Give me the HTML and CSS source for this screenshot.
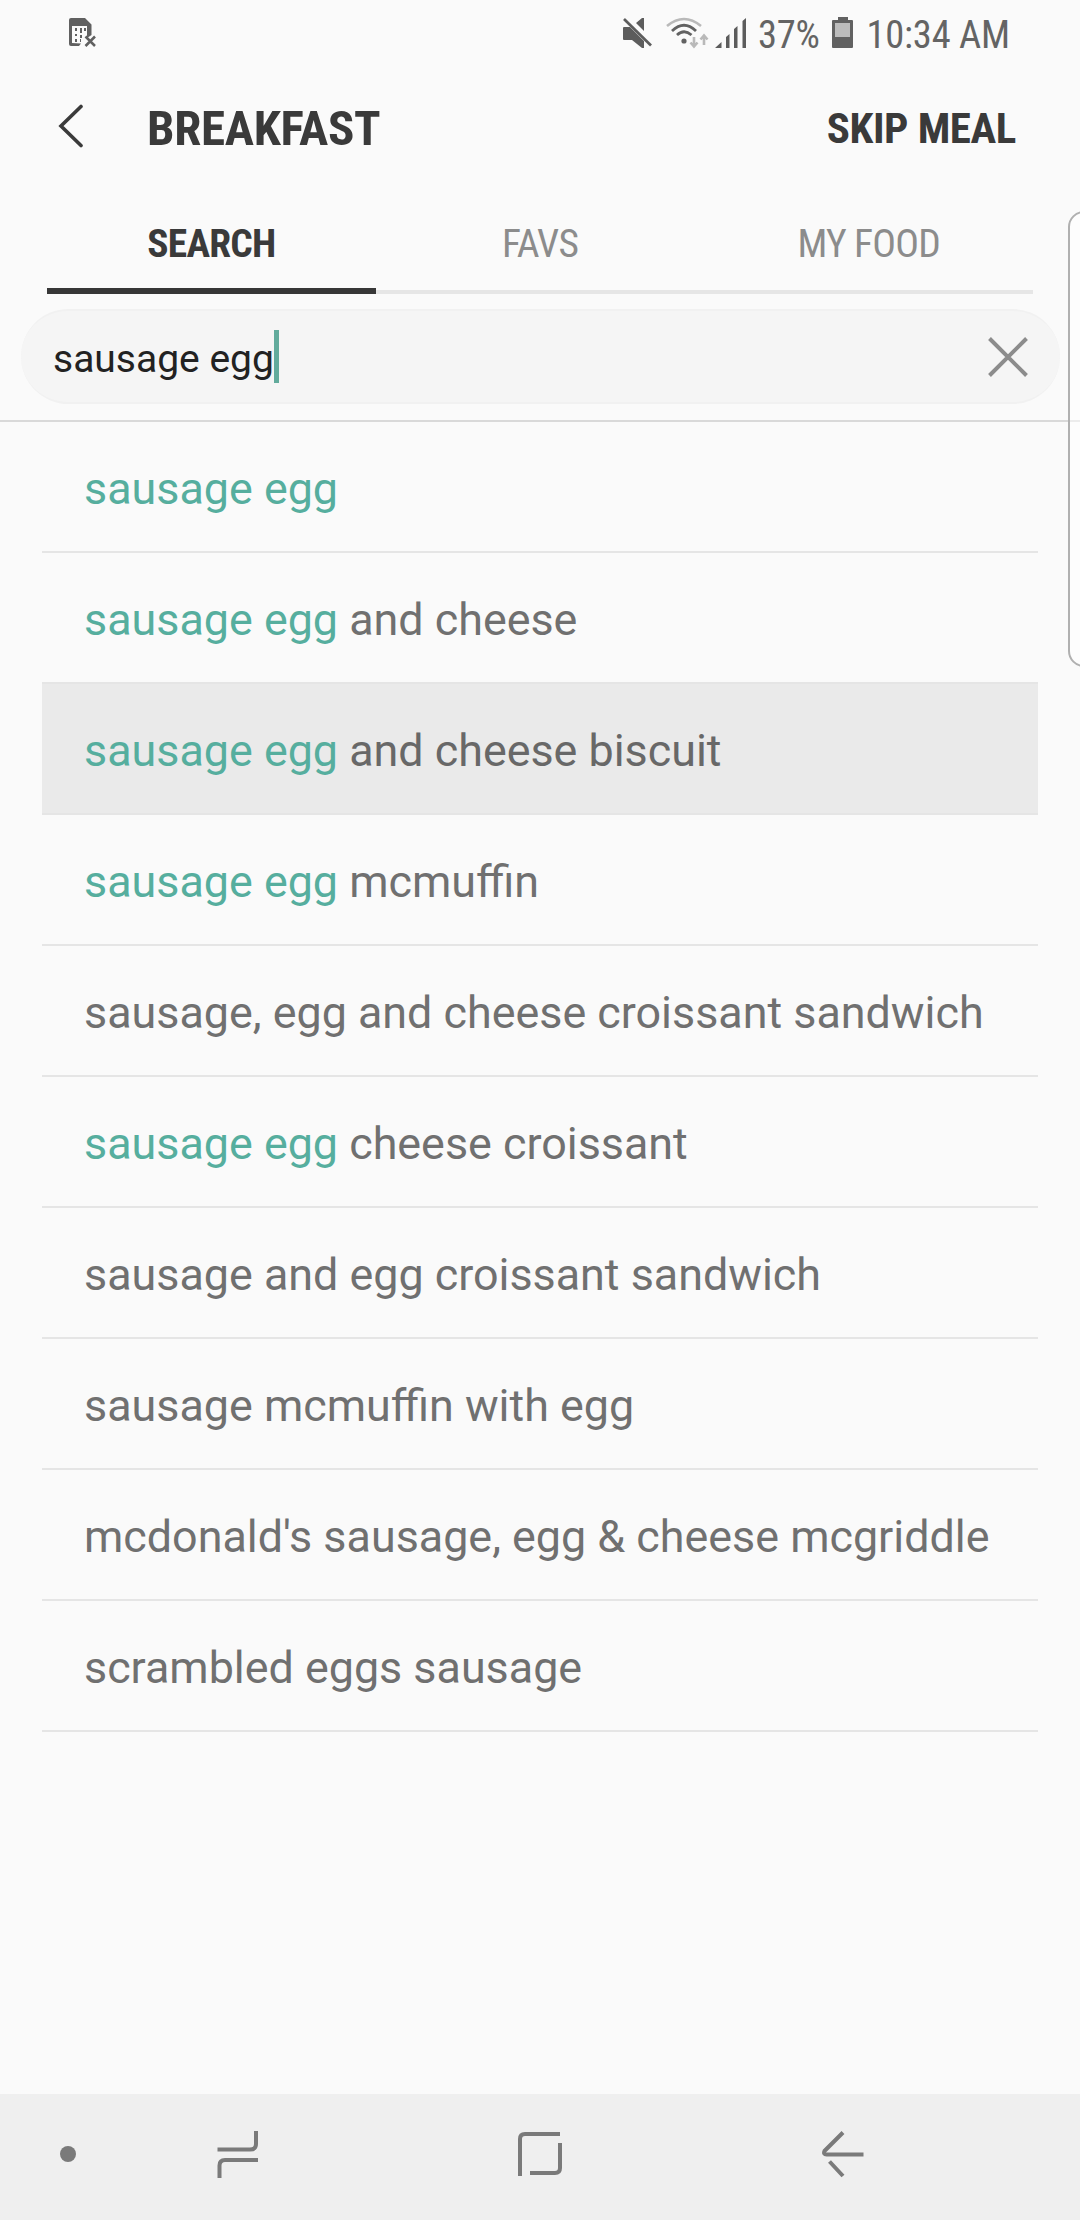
FILE: index.html
```html
<!DOCTYPE html>
<html lang="en">
<head>
    <meta charset="UTF-8">
    <meta name="viewport" content="width=device-width, initial-scale=1.0">
    <title>Breakfast</title>
    <link rel="stylesheet" href="styles.css">
</head>
<body>

    <!-- Status bar -->
    <div class="status-bar">
        <svg class="sim-icon" width="28" height="32" viewBox="0 0 28 32">
            <path d="M3 1H17L23.5 7.500V18L19 21V9H4V26L13 26.500L11 29H3Q1 29 1 27V3Q1 1 3 1Z" fill="#606060"/>
            <path d="M7 11h2v3H7zM12 11h2v5h-2zM16 11h2v3h-2zM7 17h2v2H7zM12 18h2v3h-2zM7 22h2v3H7zM12 22h1v3h-1z" fill="#606060"/>
            <path d="M17.500 19.500L27 29M27 19.500L17.500 29" stroke="#606060" stroke-width="2.500" fill="none"/>
        </svg>
        <div class="status-right">
            <svg class="mute-icon" width="30" height="32" viewBox="0 0 30 32">
                <path d="M1 11Q1 10 2 10H8L22 24V31H20L10 23H2Q1 23 1 22ZM14 6L20 1H22V14Z" fill="#5c5c5c"/>
                <path d="M2 2L29 28.500" stroke="#5c5c5c" stroke-width="2.700"/>
            </svg>
            <svg class="wifi-icon" width="43" height="32" viewBox="0 0 43 32" fill="none">
                <path d="M1 9Q18 -5 35 9" stroke="#b9b9b9" stroke-width="2.600"/>
                <path d="M6 14Q18 2.500 30 14M11 18Q18 11.500 25.500 18" stroke="#626262" stroke-width="2.800"/>
                <circle cx="18" cy="24" r="2.600" fill="#626262"/>
                <path d="M28 20V29M24.500 25.500L28 29.500L31.500 25.500M38 28V19M34.500 22.500L38 18.500L41.500 22.500" stroke="#b9b9b9" stroke-width="2.600"/>
            </svg>
            <svg class="signal-icon" width="33" height="32" viewBox="0 0 33 32" fill="#5c5c5c">
                <path d="M1 31L7.500 25V31ZM12 31V20L15.500 17V31ZM20 31V12L23.500 9V31ZM28.500 31V4L32 1V31Z"/>
            </svg>
            <span class="battery-percent">37%</span>
            <svg class="battery-icon" width="22" height="32" viewBox="0 0 22 32">
                <path d="M6 3V0H16V3H20Q21 3 21 4V30Q21 31 20 31H1Q0 31 0 30V4Q0 3 1 3Z" fill="#616161"/>
                <rect x="3" y="6" width="15" height="14" fill="#bcbcbc"/>
            </svg>
            <span class="clock">10:34 AM</span>
        </div>
    </div>

    <!-- Page header -->
    <div class="header">
        <svg class="back-icon" width="26" height="44" viewBox="0 0 26 44" fill="none">
            <path d="M23 2.500L3 22L23 41.500" stroke="#3a3a3a" stroke-width="3.600" stroke-linecap="round"/>
        </svg>
        <div class="header-title">BREAKFAST</div>
        <div class="skip-meal">SKIP MEAL</div>
    </div>

    <div class="tabs">
        <div class="tab active"><span>SEARCH</span></div>
        <div class="tab"><span>FAVS</span></div>
        <div class="tab"><span>MY FOOD</span></div>
    </div>

    <!-- Search field -->
    <div class="search-area">
        <div class="search-box">
            <span class="search-text">sausage egg</span>
            <span class="cursor"></span>
            <svg class="clear-icon" width="40" height="40" viewBox="0 0 40 40">
                <path d="M1.500 1.500L38.500 38.500M38.500 1.500L1.500 38.500" stroke="#8c8c8c" stroke-width="4"/>
            </svg>
        </div>
    </div>

    <!-- Suggestions -->
    <ul class="suggestions">
        <li><b>sausage egg</b></li>
        <li><b>sausage egg</b> and cheese</li>
        <li class="selected"><b>sausage egg</b> and cheese biscuit</li>
        <li><b>sausage egg</b> mcmuffin</li>
        <li>sausage, egg and cheese croissant sandwich</li>
        <li><b>sausage egg</b> cheese croissant</li>
        <li>sausage and egg croissant sandwich</li>
        <li>sausage mcmuffin with egg</li>
        <li>mcdonald's sausage, egg &amp; cheese mcgriddle</li>
        <li>scrambled eggs sausage</li>
    </ul>

    <!-- Navigation bar -->
    <div class="nav-bar">
        <span class="nav-dot"></span>
        <svg class="nav-recent" width="42" height="48" viewBox="0 0 42 48">
            <path d="M0.500 19.500H33Q39 19.500 39 14V1M41 30H8Q2.500 30 2.500 35.500V48"/>
        </svg>
        <svg class="nav-home" width="44" height="46" viewBox="0 0 44 46">
            <path d="M2 45V8Q2 3 7 3H42M42 12V37Q42 42 37 42H12"/>
        </svg>
        <svg class="nav-back" width="43" height="48" viewBox="0 0 43 48">
            <path d="M21 2.500L2.500 21Q1 24.500 4.500 24.500H41.500M7.500 31.500L21 46"/>
        </svg>
    </div>

    <!-- Edge panel handle -->
    <div class="edge-panel"></div>

</body>
</html>
```

FILE: styles.css
```css
body {
    font-family: Roboto, "Noto Sans", sans-serif;
    margin: 0;
    width: 1080px;
    height: 2220px;
    background-color: #fafafa;
    color: #3a3a3a;
    display: flex;
    flex-direction: column;
    position: relative;
    overflow: hidden;
}
svg {
    display: block;
    flex: none;
}
.status-bar {
    height: 66px;
    display: flex;
    justify-content: space-between;
    align-items: center;
    padding: 0 70px 0 68px;
    color: #646464;
    font-size: 38.5px;
    font-stretch: 75%;
    white-space: nowrap;
}
.status-right {
    display: flex;
    align-items: center;
}
.battery-percent, .clock {
    padding-top: 3px;
    letter-spacing: -0.2px;
}
.wifi-icon {
    margin-left: 14px;
}
.signal-icon {
    margin-left: 5px;
}
.battery-percent {
    margin-left: 11px;
    width: 74px;
}
.clock {
    margin-left: 9px;
    width: 147px;
    text-align: right;
}
.header {
    height: 122px;
    display: flex;
    align-items: center;
    padding: 0 64px 0 58px;
    font-weight: bold;
    font-stretch: 75%;
}
.back-icon {
    margin-bottom: 2px;
}
.header-title {
    margin-left: 63px;
    padding-top: 2px;
    font-size: 49px;
    letter-spacing: -0.3px;
}
.skip-meal {
    margin-left: auto;
    padding-top: 2px;
    font-size: 43px;
    letter-spacing: -0.4px;
}
.tabs {
    height: 106px;
    margin: 0 47px;
    display: flex;
    box-shadow: inset 0 -4px #e6e6e6;
}
.tab {
    flex: 1;
    box-sizing: border-box;
    padding-top: 32px;
    text-align: center;
    font-size: 39.5px;
    font-stretch: 75%;
    letter-spacing: -0.8px;
    color: #8c8c8c;
}
.tab.active {
    font-weight: bold;
    color: #3a3a3a;
    border-bottom: 6px solid #373737;
}
.search-area {
    height: 126px;
    border-bottom: 2px solid #d9d9d9;
}
.search-box {
    height: 95px;
    margin: 15px 20px 0 21px;
    box-sizing: border-box;
    padding: 0 32px;
    border-top: 2px solid #f1f1f1;
    border-bottom: 2px solid #f1f1f1;
    border-radius: 48px;
    background-color: #f5f5f5;
    display: flex;
    align-items: center;
}
.search-text {
    font-size: 39px;
    color: #222;
    padding-top: 5px;
}
.cursor {
    width: 5px;
    height: 53px;
    background-color: #62ab9c;
}
.clear-icon {
    margin-left: auto;
}
.suggestions {
    list-style-type: none;
    margin: 0 42px;
    padding: 0;
}
.suggestions li {
    height: 131px;
    box-sizing: border-box;
    padding: 4px 0 0 42px;
    border-bottom: 2px solid #e5e5e5;
    font-size: 44.85px;
    line-height: 125px;
    white-space: nowrap;
    color: #707070;
}
.suggestions b {
    font-weight: normal;
    color: #56ae9e;
}
.suggestions .selected {
    background-color: #eaeaea;
    color: #686868;
}
.nav-bar {
    height: 126px;
    margin-top: auto;
    display: flex;
    align-items: center;
    box-sizing: border-box;
    padding: 0 215px 6px 60px;
    background-color: #efefef;
}
.nav-bar svg {
    fill: none;
    stroke: #7a7a7a;
    stroke-width: 4;
}
.nav-dot {
    width: 16px;
    height: 16px;
    border-radius: 50%;
    background-color: #7a7a7a;
}
.nav-recent {
    margin-left: 141px;
}
.nav-home {
    margin-left: 259px;
}
.nav-back {
    margin-left: auto;
}
.edge-panel {
    position: absolute;
    top: 211px;
    right: -20px;
    width: 32px;
    height: 456px;
    box-sizing: border-box;
    border: 2px solid #b0b0b0;
    border-radius: 18px;
    background-color: rgba(255, 255, 255, 0.5);
}
```
